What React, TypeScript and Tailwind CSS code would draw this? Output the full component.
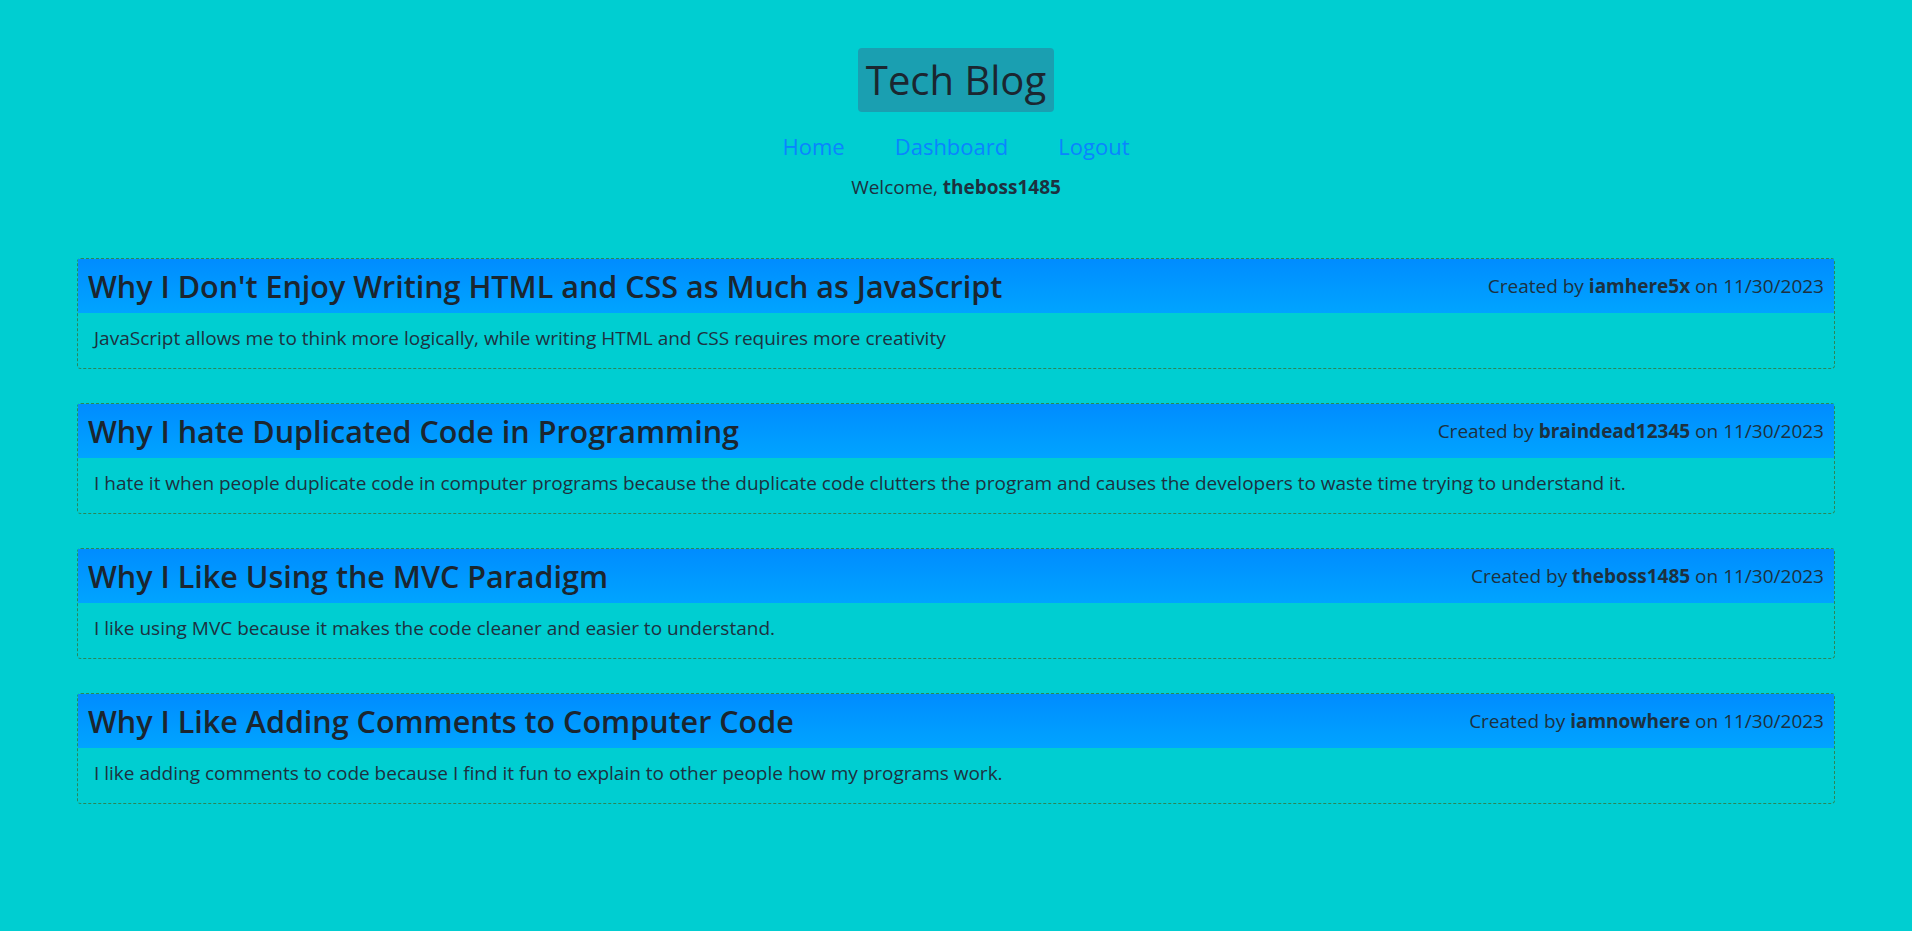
import React from "react";

const posts = [
  {
    title: "Why I Don't Enjoy Writing HTML and CSS as Much as JavaScript",
    author: "iamhere5x",
    date: "11/30/2023",
    body: "JavaScript allows me to think more logically, while writing HTML and CSS requires more creativity",
  },
  {
    title: "Why I hate Duplicated Code in Programming",
    author: "braindead12345",
    date: "11/30/2023",
    body: "I hate it when people duplicate code in computer programs because the duplicate code clutters the program and causes the developers to waste time trying to understand it.",
  },
  {
    title: "Why I Like Using the MVC Paradigm",
    author: "theboss1485",
    date: "11/30/2023",
    body: "I like using MVC because it makes the code cleaner and easier to understand.",
  },
  {
    title: "Why I Like Adding Comments to Computer Code",
    author: "iamnowhere",
    date: "11/30/2023",
    body: "I like adding comments to code because I find it fun to explain to other people how my programs work.",
  },
];

const links = ["Home", "Dashboard", "Logout"];

const App = () => {
  return (
    <div className="min-h-screen bg-[#00ced1] text-[#1d3140] font-['Open_Sans','Liberation_Sans',sans-serif]">
      <header className="pt-12 flex flex-col items-center">
        <h1 className="bg-[#1a9fb1] rounded px-2 h-16 flex items-center text-[40px] leading-none font-medium text-[#1b2630]">
          Tech Blog
        </h1>
        <nav className="mt-[18px] flex gap-[50px] text-[22px] leading-[33px]">
          {links.map((link) => (
            <a key={link} href="#" className="text-[#0a84ff]">
              {link}
            </a>
          ))}
        </nav>
        <p className="mt-[10px] text-[19px] leading-[28px]">
          Welcome, <span className="font-bold">theboss1485</span>
        </p>
      </header>

      <main className="px-[77px] mt-[57px] flex flex-col gap-[34px]">
        {posts.map((post, index) => (
          <div key={index} className="border border-dashed border-[#2b8758] rounded">
            <div className="h-[54px] px-2.5 flex items-center justify-between bg-gradient-to-b from-[#008cff] to-[#00a4ff]">
              <h2 className="text-[30.5px] leading-tight font-semibold text-[#1b2630]">{post.title}</h2>
              <p className="text-[19px]">
                Created by <span className="font-bold">{post.author}</span> on {post.date}
              </p>
            </div>
            <p className="px-4 pt-[11px] pb-[16px] text-[19px] leading-[28px]">{post.body}</p>
          </div>
        ))}
      </main>
    </div>
  );
};

export default App;
